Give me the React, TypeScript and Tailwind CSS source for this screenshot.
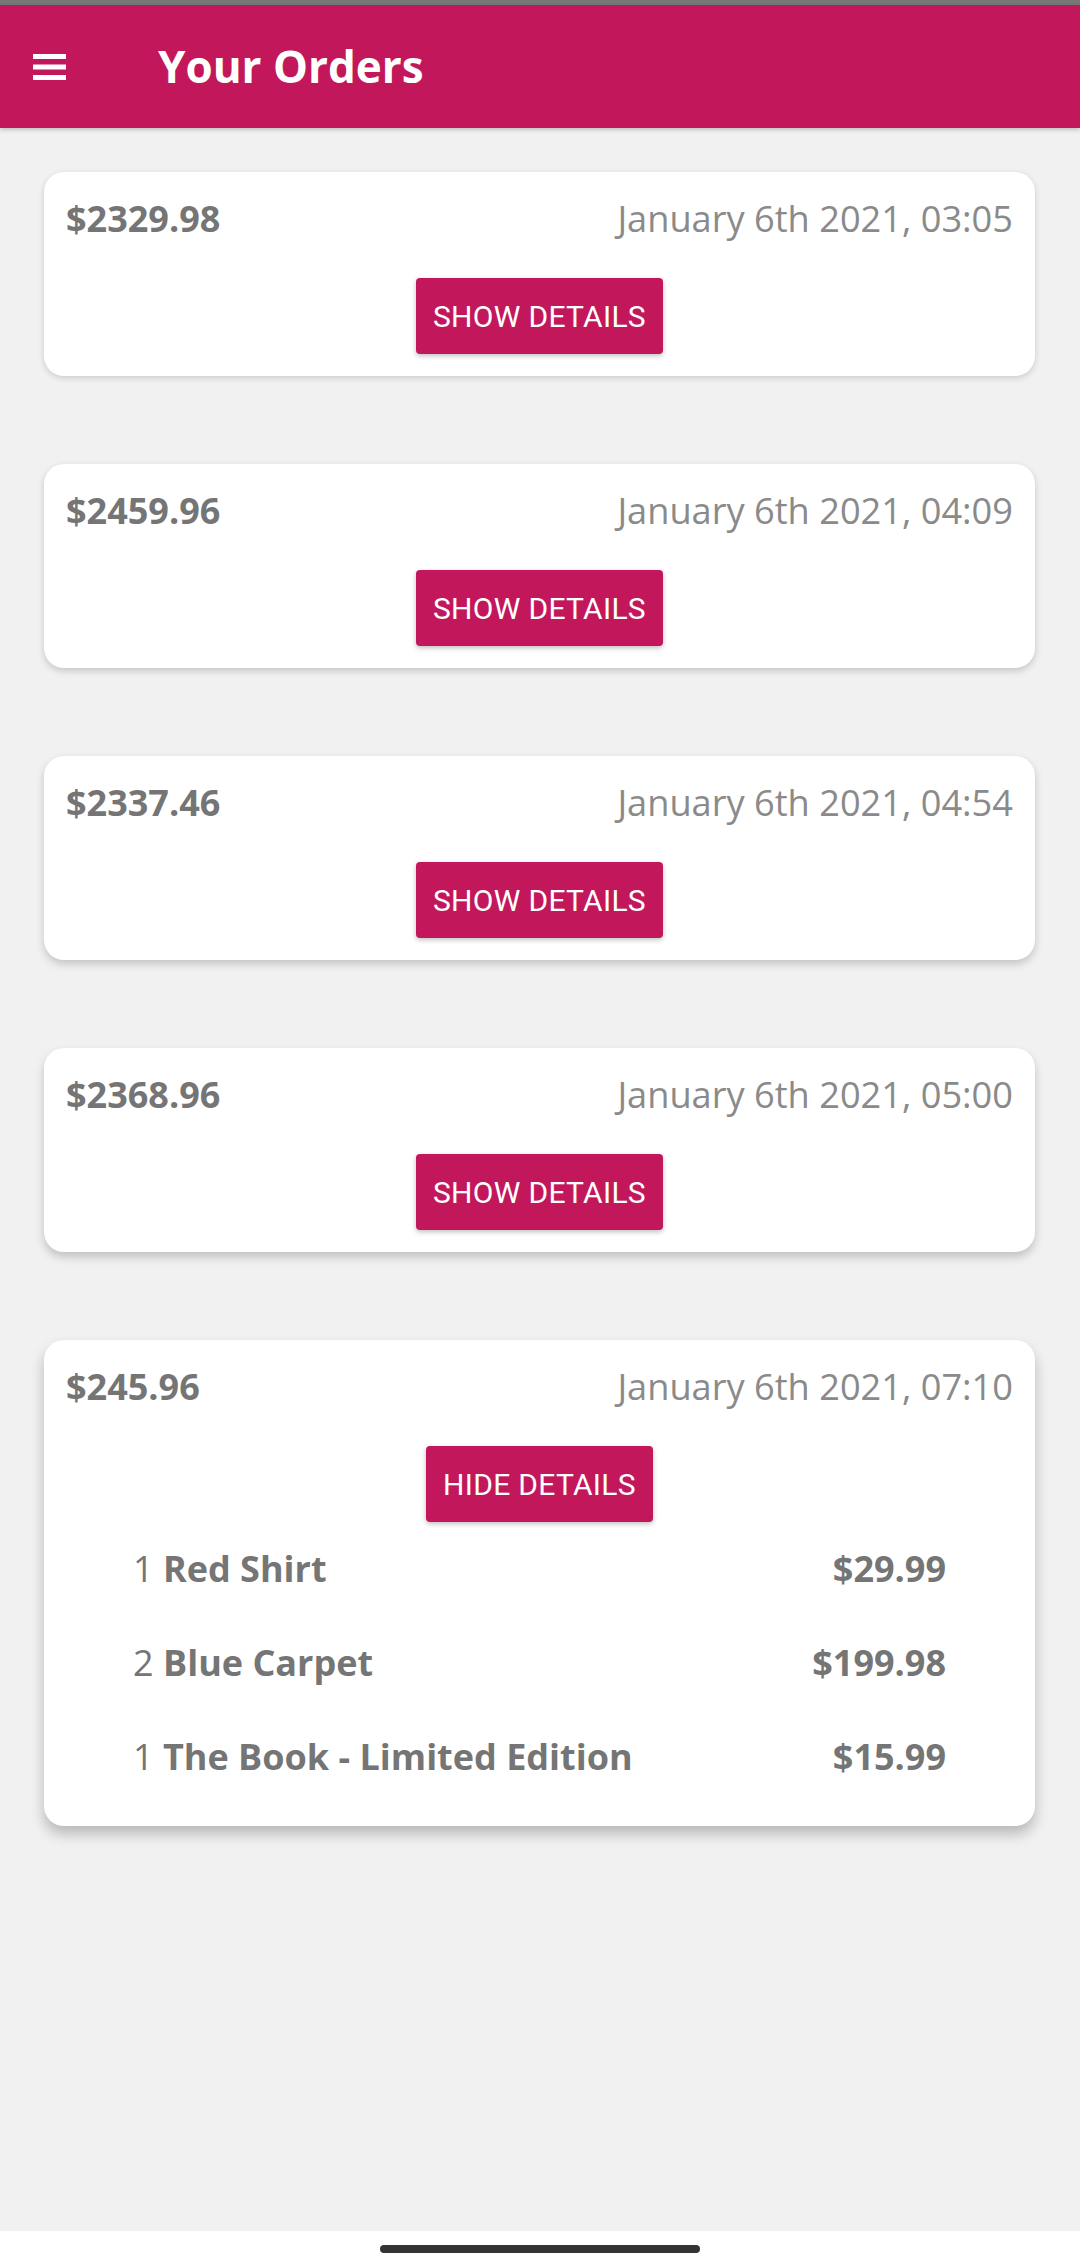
import React from "react";

type Item = { qty: number; name: string; price: string };
type Order = { total: string; date: string; expanded?: boolean; items?: Item[] };

const orders: Order[] = [
  { total: "$2329.98", date: "January 6th 2021, 03:05" },
  { total: "$2459.96", date: "January 6th 2021, 04:09" },
  { total: "$2337.46", date: "January 6th 2021, 04:54" },
  { total: "$2368.96", date: "January 6th 2021, 05:00" },
  {
    total: "$245.96",
    date: "January 6th 2021, 07:10",
    expanded: true,
    items: [
      { qty: 1, name: "Red Shirt", price: "$29.99" },
      { qty: 2, name: "Blue Carpet", price: "$199.98" },
      { qty: 1, name: "The Book - Limited Edition", price: "$15.99" },
    ],
  },
];

const shadows = [
  "shadow-[0_2px_6px_rgba(0,0,0,0.16)]",
  "shadow-[0_3px_7px_rgba(0,0,0,0.18)]",
  "shadow-[0_4px_8px_rgba(0,0,0,0.19)]",
  "shadow-[0_5px_10px_rgba(0,0,0,0.2)]",
  "shadow-[0_8px_14px_rgba(0,0,0,0.24)]",
];

function OrderCard({ order, idx }: { order: Order; idx: number }) {
  return (
    <div className={`bg-white rounded-[20px] ${shadows[idx]} px-[22px] pt-[22px] pb-[22px]`}>
      <div className="flex justify-between items-center h-[49px] font-['Open_Sans',sans-serif] text-[36px]">
        <span className="font-bold text-[#757575]">{order.total}</span>
        <span className="font-normal text-[#8a8a8a] text-[36.2px]">{order.date}</span>
      </div>
      <div className="flex justify-center mt-[35px]">
        <button className="h-[76px] px-[17px] bg-[#C2185B] text-white rounded-[4px] shadow-[0_2px_5px_rgba(0,0,0,0.25)] font-['Roboto',sans-serif] text-[30px] tracking-[0.3px] uppercase">
          {order.expanded ? "Hide Details" : "Show Details"}
        </button>
      </div>
      {order.items && (
        <div className="px-[67px]">
          {order.items.map((it, i) => (
            <div
              key={i}
              className="h-[94px] flex items-center justify-between font-['Open_Sans',sans-serif] text-[36px] text-[#757575]"
            >
              <span>
                <span className="font-normal">{it.qty} </span>
                <span className="font-bold">{it.name}</span>
              </span>
              <span className="font-bold">{it.price}</span>
            </div>
          ))}
        </div>
      )}
    </div>
  );
}

export default function App() {
  return (
    <div className="w-[1080px] min-h-[2266px] flex flex-col bg-[#f1f1f1]">
      <div className="h-[5px] bg-[#777777]" />
      <header className="h-[123px] bg-[#C2185B] flex items-center shadow-[0_2px_4px_rgba(0,0,0,0.2)]">
        <div className="w-[158px] pl-[33px] flex items-center">
          <svg width="33" height="26" viewBox="0 0 33 26">
            <rect x="0" y="0" width="33" height="5" fill="#fff" />
            <rect x="0" y="10.5" width="33" height="5" fill="#fff" />
            <rect x="0" y="21" width="33" height="5" fill="#fff" />
          </svg>
        </div>
        <h1 className="font-['Open_Sans',sans-serif] font-bold text-[44px] text-white leading-none mt-[-2px]">
          Your Orders
        </h1>
      </header>
      <main className="flex-1 flex flex-col gap-[88px] pt-[44px] pl-[44px] pr-[45px]">
        {orders.map((o, i) => (
          <OrderCard key={i} order={o} idx={i} />
        ))}
      </main>
      <div className="h-[35px] bg-white flex justify-center pt-[14px]">
        <div className="w-[320px] h-[8px] rounded-full bg-[#333333]" />
      </div>
    </div>
  );
}
